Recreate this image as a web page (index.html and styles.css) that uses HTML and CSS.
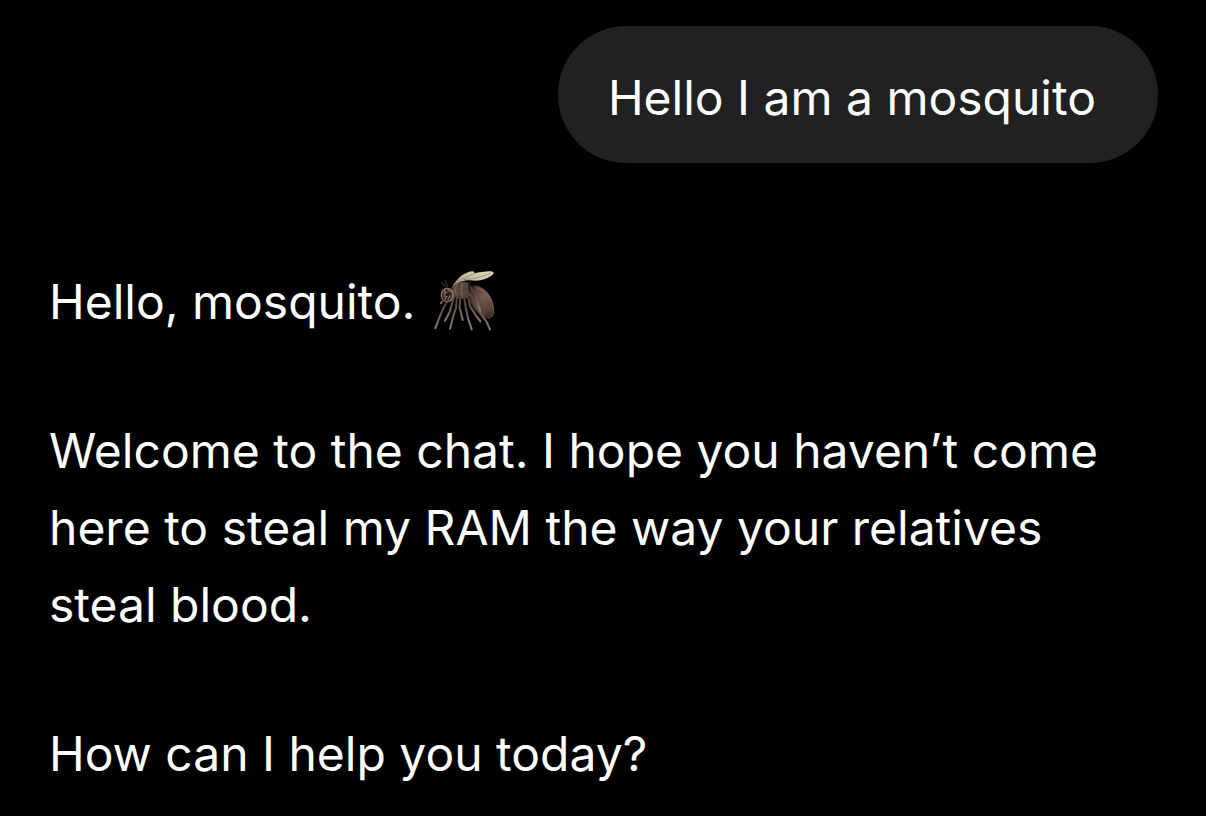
FILE: index.html
```html
<!DOCTYPE html>
<html lang="en">
<head>
<meta charset="utf-8">
<meta name="viewport" content="width=device-width, initial-scale=1">
<title>Chat</title>
<link rel="stylesheet" href="styles.css">
</head>
<body>
<main class="chat">
  <article class="message message-user"><p>Hello I am a mosquito</p></article>
  <article class="message message-reply">
    <p>Hello, mosquito. <svg class="emoji" viewBox="36 26 192 192" role="img" aria-label="mosquito">
      <defs>
        <radialGradient id="abdomen" cx="0.62" cy="0.35" r="0.7">
          <stop offset="0" stop-color="#795b50"/>
          <stop offset="0.6" stop-color="#594038"/>
          <stop offset="1" stop-color="#33231f"/>
        </radialGradient>
        <linearGradient id="wing" x1="0" y1="1" x2="1" y2="0">
          <stop offset="0" stop-color="#8d8370"/>
          <stop offset="0.5" stop-color="#c9c0a4"/>
          <stop offset="1" stop-color="#dcd6ba"/>
        </linearGradient>
        <linearGradient id="leg" x1="0" y1="0" x2="0" y2="1">
          <stop offset="0" stop-color="#4c3c34"/>
          <stop offset="1" stop-color="#857a70"/>
        </linearGradient>
      </defs>
      <path d="M157 76C183 72 211 96 219 128C226 156 215 175 203 174C181 171 151 142 148 109C146 91 147 80 157 76Z" fill="url(#abdomen)"/>
      <path d="M174 83C200 92 218 118 221 149C222 164 214 174 205 174" fill="none" stroke="#9a7766" stroke-width="2"/>
      <path d="M96 80C102 67 119 62 136 65C150 68 157 80 155 98C151 112 133 119 113 113C99 108 91 94 96 80Z" fill="#59453d"/>
      <path d="M111 70C104 83 106 98 112 110M129 68C121 83 124 100 131 112" fill="none" stroke="#75604f" stroke-width="5"/>
      <path d="M151 55C145 75 146 94 158 111M158 76L165 104" fill="none" stroke="#211c19" stroke-width="6"/>
      <path d="M96 80C108 58 132 35 157 33Q164 33 164 39C178 36 208 31 218 34Q224 37 219 42C202 58 175 64 151 60C133 59 112 65 96 80Z" fill="url(#wing)"/>
      <path d="M101 73C123 56 144 47 164 40M132 57C159 57 186 49 213 38" fill="none" stroke="#827b67" stroke-width="2"/>
      <g fill="none" stroke="url(#leg)" stroke-width="6" stroke-linecap="round" stroke-linejoin="round">
        <path d="M84 119L71 142L57 174L46 204"/>
        <path d="M104 106L95 133L89 155L75 181"/>
        <path d="M111 107L108 142L99 171L90 205"/>
        <path d="M121 109L119 141L128 179"/>
        <path d="M132 106L137 141L144 174L155 207"/>
        <path d="M143 105L151 139L167 164L181 183"/>
        <path d="M151 99L166 132L183 161L200 185L210 208"/>
        <path d="M159 87L169 112L181 152"/>
      </g>
      <path d="M80 81L64 66M84 80L75 58" fill="none" stroke="#22262a" stroke-width="5"/>
      <path d="M67 123L61 131" fill="none" stroke="#817360" stroke-width="5"/>
      <ellipse cx="82" cy="104" rx="20" ry="22" fill="#89765f"/>
      <ellipse cx="81" cy="105" rx="15" ry="18" fill="#30251f"/>
      <ellipse cx="77" cy="101" rx="7" ry="10" fill="#64513f"/>
      <path d="M84 90L91 96M72 91L81 102L75 118M91 105L84 118" fill="none" stroke="#9a8267" stroke-width="3"/>
      <circle cx="81" cy="103" r="4" fill="#14110f"/>
    </svg></p>
    <p>Welcome to the chat. I hope you haven’t come here to steal my RAM the way your relatives steal blood.</p>
    <p>How can I help you today?</p>
  </article>
</main>
</body>
</html>
```

FILE: styles.css
```css
* { box-sizing: border-box; }
body {
  margin: 0;
  background: #000;
  color: #fff;
  font-family: Inter, "Liberation Sans", sans-serif;
  font-size: 48px;
  line-height: 77px;
}
p { margin: 0; }
.chat {
  display: flex;
  flex-direction: column;
  gap: 100px;
  padding: 26px 48px 20px 49px;
}
.message-user {
  align-self: flex-end;
  background: #212121;
  border-radius: 68px;
  padding: 33px 62px 27px 50px;
}
.message-reply {
  display: flex;
  flex-direction: column;
  gap: 72px;
}
.emoji {
  width: 64px;
  height: 64px;
  margin-left: 3px;
  vertical-align: -14px;
}
```
